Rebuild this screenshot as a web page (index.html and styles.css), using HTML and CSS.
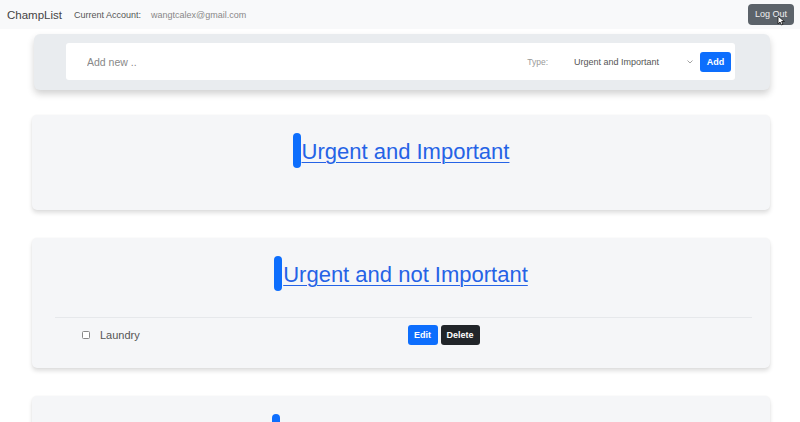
FILE: index.html
```html
<!DOCTYPE html>
<html lang="en">
<head>
<meta charset="utf-8">
<title>ChampList</title>
<link rel="stylesheet" href="styles.css">
</head>
<body>
<nav class="navbar">
  <span class="brand">ChampList</span>
  <span class="acct-label">Current Account:</span>
  <span class="acct-email">wangtcalex@gmail.com</span>
  <div class="logout-wrap">
    <button class="logout">Log Out</button>
    <svg class="cursor" width="9" height="11" viewBox="0 0 9 11"><path d="M1 1 L1 9 L3 7 L4.5 10 L6 9.3 L4.6 6.5 L7.5 6.5 Z" fill="#fff" stroke="#222" stroke-width="0.9" stroke-linejoin="round"/></svg>
  </div>
</nav>
<main class="container">
  <section class="add-card">
    <div class="add-inner">
      <input class="add-input" type="text" placeholder="Add new ..">
      <span class="type-label">Type:</span>
      <div class="type-select">
        <span>Urgent and Important</span>
        <svg width="6" height="4" viewBox="0 0 6 4"><path d="M0.5 0.5 L3 3 L5.5 0.5" fill="none" stroke="#999" stroke-width="0.9"/></svg>
      </div>
      <button class="btn-add">Add</button>
    </div>
  </section>

  <section class="card">
    <h2 class="card-title"><span class="bar"></span><a href="#">Urgent and Important</a></h2>
    <ul class="items"></ul>
  </section>

  <section class="card">
    <h2 class="card-title"><span class="bar"></span><a href="#">Urgent and not Important</a></h2>
    <ul class="items">
      <li class="item">
        <div class="item-left"><span class="check"></span><span class="item-text">Laundry</span></div>
        <div class="item-right"><button class="btn-edit">Edit</button><button class="btn-delete">Delete</button></div>
      </li>
    </ul>
  </section>

  <section class="card">
    <h2 class="card-title"><span class="bar"></span><a href="#">Not Urgent and Important</a></h2>
    <ul class="items"></ul>
  </section>
</main>
</body>
</html>
```

FILE: styles.css
```css
html { overflow: hidden; }
body {
  margin: 0;
  background: #ffffff;
  font-family: "Liberation Sans", Arial, sans-serif;
  color: #333;
}

.navbar {
  height: 29px;
  background: #f8f9fa;
  display: flex;
  align-items: center;
  padding: 0 6px 0 7px;
}
.brand { font-size: 11.5px; color: #444; margin-right: 12px; }
.acct-label { font-size: 9px; color: #555; margin-right: 10px; }
.acct-email { font-size: 9px; color: #888; }
.logout-wrap { margin-left: auto; position: relative; }
.logout {
  display: block;
  width: 46px;
  height: 21px;
  border: none;
  border-radius: 4px;
  background: #5c636a;
  color: #f0f0f0;
  font-family: inherit;
  font-size: 9px;
  padding: 0;
  margin-top: -1px;
}
.cursor { position: absolute; left: 29px; top: 10px; }

.container {
  padding: 5px 30px 0 32px;
}

.add-card {
  margin-left: 2px;
  background: #e9ecef;
  border-radius: 6px;
  padding: 9px 35px 10px 32px;
  box-shadow: 0 4px 7px rgba(0, 0, 0, 0.18);
  margin-bottom: 25px;
}
.add-inner {
  height: 37px;
  background: #fff;
  border-radius: 3px;
  display: flex;
  align-items: center;
  padding: 0 4px 0 21px;
}
.add-input {
  flex: 1;
  border: none;
  outline: none;
  background: transparent;
  font-family: inherit;
  font-size: 10.5px;
  padding: 0;
  color: #333;
}
.add-input::placeholder { color: #888; }
.type-label { font-size: 8.5px; color: #999; margin-right: 14px; }
.type-select {
  width: 136px;
  box-sizing: border-box;
  padding: 0 5px 0 12px;
  display: flex;
  align-items: center;
  justify-content: space-between;
  font-size: 9px;
  color: #555;
}
.btn-add {
  width: 31px;
  height: 20px;
  margin-left: 2px;
  border: none;
  border-radius: 3px;
  background: #0d6efd;
  color: #fff;
  font-family: inherit;
  font-size: 9px;
  font-weight: bold;
  padding: 0;
}

.card {
  width: 738px;
  background: #f5f6f8;
  border-radius: 5px;
  padding: 18px 0 16px;
  box-sizing: border-box;
  box-shadow: 0 3px 4px rgba(0, 0, 0, 0.13), 0 0 2px rgba(0, 0, 0, 0.05);
  margin-bottom: 28px;
}
.card-title {
  margin: 0 0 26px;
  display: flex;
  justify-content: center;
  align-items: center;
  height: 35px;
  font-weight: normal;
  font-size: 22px;
}
.bar {
  width: 8px;
  height: 35px;
  border-radius: 4px;
  background: #0d6efd;
}
.card-title a {
  color: #2563e6;
  text-decoration: underline;
  text-decoration-thickness: 1px;
  text-underline-offset: 3px;
  line-height: 35px;
  margin-left: 1px;
  padding-top: 1px;
}

.items {
  list-style: none;
  margin: 0 18px 0 23px;
  padding: 0;
}
.item {
  border-top: 1px solid #e6e8eb;
  height: 34px;
  display: grid;
  grid-template-columns: 1fr 1fr;
  align-items: center;
}
.item-left { display: flex; align-items: center; padding-left: 27px; }
.check {
  width: 6px;
  height: 6px;
  border: 1px solid #888;
  border-radius: 1.5px;
  background: #fff;
  margin-right: 10px;
}
.item-text { font-size: 11px; color: #555; }
.item-right { display: flex; gap: 3px; padding-left: 4px; }
.btn-edit, .btn-delete {
  height: 20px;
  border: none;
  border-radius: 3px;
  color: #fff;
  font-family: inherit;
  font-size: 9px;
  font-weight: bold;
  padding: 0;
}
.btn-edit { width: 30px; background: #0d6efd; }
.btn-delete { width: 39px; background: #212529; }
```
